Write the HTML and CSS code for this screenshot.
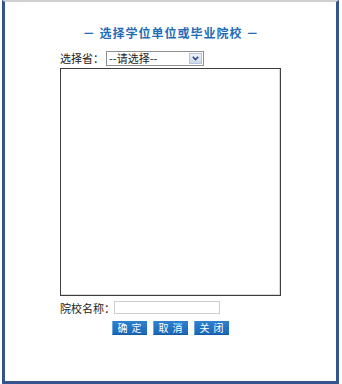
FILE: index.html
```html
<!DOCTYPE html>
<html lang="zh-CN">
<head>
<meta charset="utf-8">
<title>选择学位单位或毕业院校</title>
<link rel="stylesheet" href="styles.css">
</head>
<body>
<div class="frame">
  <h1 class="title">－ 选择学位单位或毕业院校 －</h1>
  <div class="form">
    <div class="row">
      <span class="label">选择省：</span>
      <div class="select">
        <span class="select-text">--请选择--</span>
        <span class="select-btn">
          <svg width="7" height="5" viewBox="0 0 7 5"><path d="M0.8 0.8 L3.5 3.6 L6.2 0.8" fill="none" stroke="#2c4a86" stroke-width="1.6"/></svg>
        </span>
      </div>
    </div>
    <div class="listbox"></div>
    <div class="row name-row">
      <span class="label">院校名称：</span>
      <div class="input"></div>
    </div>
  </div>
  <div class="buttons">
    <button class="btn">确 定</button>
    <button class="btn">取 消</button>
    <button class="btn">关 闭</button>
  </div>
</div>
</body>
</html>
```
FILE: styles.css
```css
html, body {
  margin: 0;
  padding: 0;
  background: #ffffff;
}
body {
  font-family: "Noto Sans CJK SC", "Liberation Sans", sans-serif;
  color: #222;
}
.frame {
  box-sizing: border-box;
  margin: 0 3px 0 2px;
  height: 384px;
  border-left: 3px solid #35538f;
  border-right: 3px solid #35538f;
  border-bottom: 3px solid #35538f;
  border-top: 2px solid #d0d0d0;
  background: #fff;
  padding-top: 24px;
}
.title {
  margin: 0;
  text-align: center;
  font-size: 12px;
  line-height: 14px;
  font-weight: bold;
  letter-spacing: 1px;
  color: #1f6cb6;
  padding-left: 1px;
}
.form {
  margin-left: 55px;
  width: 221px;
  margin-top: 11px;
}
.row {
  display: flex;
  align-items: center;
  height: 14px;
}
.label {
  font-size: 11px;
  line-height: 14px;
  color: #222;
  width: 46px;
  flex: none;
  white-space: nowrap;
}
.name-row {
  margin-top: 5px;
  height: 13px;
}
.name-row .label {
  width: 54px;
}
.select {
  box-sizing: border-box;
  width: 98px;
  height: 15px;
  border: 1px solid #8f8f8f;
  display: flex;
  align-items: center;
  background: #fff;
}
.select-text {
  flex: 1;
  font-size: 11px;
  line-height: 13px;
  padding-left: 2px;
  color: #222;
}
.select-btn {
  box-sizing: border-box;
  width: 13px;
  height: 11px;
  margin-right: 1px;
  background: linear-gradient(#eef2f9, #cfd9ec);
  border: 1px solid #b6c4df;
  display: flex;
  align-items: center;
  justify-content: center;
}
.listbox {
  box-sizing: border-box;
  margin-top: 3px;
  width: 221px;
  height: 228px;
  border: 1px solid #3e3e3e;
  box-shadow: inset -1px -1px 0 #d8d8d8;
  background: #fff;
}
.input {
  box-sizing: border-box;
  width: 106px;
  height: 13px;
  border: 1px solid #cfcfcf;
  background: #fff;
}
.buttons {
  display: flex;
  justify-content: center;
  gap: 6px;
  margin-top: 7px;
}
.btn {
  box-sizing: border-box;
  width: 35px;
  height: 14px;
  padding: 0;
  margin: 0;
  border: none;
  border-left: 1px solid #6aa6e0;
  border-bottom: 1px solid #145aa5;
  background: linear-gradient(#2f80cf, #1b68b8);
  color: #fff;
  font-family: "Noto Sans CJK SC", "Liberation Sans", sans-serif;
  font-size: 10px;
  line-height: 12px;
  letter-spacing: 1px;
}
```
